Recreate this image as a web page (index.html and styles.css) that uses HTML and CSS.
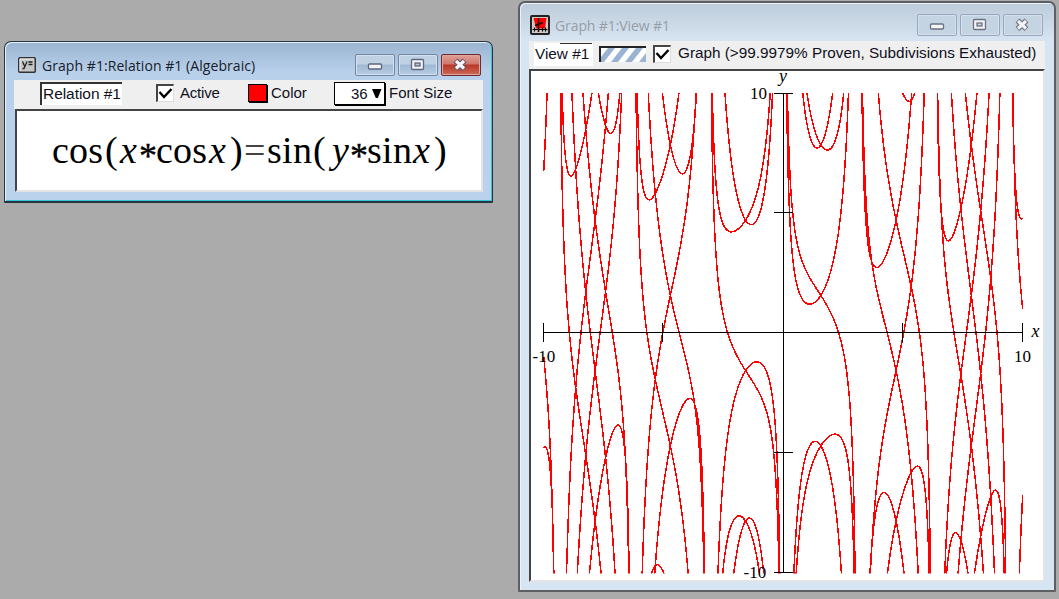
FILE: index.html
```html
<!DOCTYPE html>
<html lang="en">
<head>
<meta charset="utf-8">
<title>Graph</title>
<link rel="stylesheet" href="styles.css">
</head>
<body>
<div class="desktop">
  <section class="window relation">
    <header class="titlebar">
      <svg class="icon" width="18" height="16" viewBox="0 0 18 16">
        <rect x=".75" y=".75" width="16.5" height="14.5" rx="1" fill="#c6c6c6" stroke="#333" stroke-width="1.5"/>
        <path d="M2 14V2H16" fill="none" stroke="#f4f4f4"/>
        <path d="M4.500 4.500L6.500 9M9 4.500L6 11.500H4.500M10.500 5H14.500M10.500 7.500H14.500" fill="none" stroke="#222" stroke-width="1.300"/>
      </svg>
      <h1 class="title">Graph #1:Relation #1 (Algebraic)</h1>
      <div class="controls">
        <span class="btn"><svg width="40" height="22"><rect x="13.500" y="10" width="13" height="5" rx="1" fill="#f4f4f4" stroke="#5f6780" stroke-width="1.300"/></svg></span>
        <span class="btn"><svg width="40" height="22"><rect x="13.500" y="5.500" width="12" height="10" rx="1" fill="#f4f4f4" stroke="#5f6780" stroke-width="1.300"/><rect x="17" y="9" width="5" height="3" fill="#b5c4d6" stroke="#5f6780" stroke-width="1.300"/></svg></span>
        <span class="btn close"><svg width="40" height="22"><path d="M14.500 6.500L23.500 15M23.500 6.500L14.500 15" stroke="#66566a" stroke-width="5.600"/><path d="M15 7L23 14.500M23 7L15 14.500" stroke="#f6f6f6" stroke-width="3.200"/></svg></span>
      </div>
    </header>
    <div class="toolbar">
      <span class="field name">Relation #1</span>
      <span class="check"><svg width="18" height="18"><path d="M3.500 8L8 13L15.500 5" fill="none" stroke="#000" stroke-width="2.400"/></svg></span>
      <span class="label active">Active</span>
      <span class="swatch"></span>
      <span class="label color">Color</span>
      <span class="select"><span>36</span><svg width="10" height="10"><path d="M0 0H9.500L5.800 9H3.800Z"/></svg></span>
      <span class="label">Font Size</span>
    </div>
    <div class="pane">
      <svg class="formula" width="465" height="80" role="img">
        <text y="52"><tspan x="35" textLength="51">cos</tspan><tspan class="paren" x="88">(</tspan><tspan class="var" x="103">x</tspan><tspan class="star" x="122" dy="5">*</tspan><tspan x="139" dy="-5" textLength="51">cos</tspan><tspan class="var" x="192">x</tspan><tspan class="paren" x="213">)</tspan><tspan class="eq" x="227">=</tspan><tspan x="250" textLength="45">sin</tspan><tspan class="paren" x="296">(</tspan><tspan class="var" x="315">y</tspan><tspan class="star" x="333" dy="5">*</tspan><tspan x="350" dy="-5" textLength="45">sin</tspan><tspan class="var" x="396">x</tspan><tspan class="paren" x="417">)</tspan></text>
      </svg>
    </div>
  </section>

  <section class="window view">
    <header class="titlebar">
      <svg class="icon" width="20" height="20" viewBox="0 0 20 20">
        <rect x="1" y="1" width="18" height="18" rx="1" fill="#cfc8c8" stroke="#222" stroke-width="2"/>
        <path d="M3.500 3H16.500L15 13.500H6L5 9Z" fill="#f00"/>
        <path d="M8.500 3V17M5 10.500L13 7.500" stroke="#200" stroke-width="1.500"/>
        <path d="M2.500 14.500H17.500M4.500 12.500V16.500M12.500 12.500V16.500M15.500 12.500V16.500" stroke="#000" stroke-width="1.200"/>
      </svg>
      <h1 class="title">Graph #1:View #1</h1>
      <div class="controls">
        <span class="btn"><svg width="40" height="22"><rect x="13.500" y="10" width="13" height="5" rx="1" fill="#f4f4f4" stroke="#6b7283" stroke-width="1.300"/></svg></span>
        <span class="btn"><svg width="40" height="22"><rect x="13.500" y="5.500" width="12" height="10" rx="1" fill="#f4f4f4" stroke="#6b7283" stroke-width="1.300"/><rect x="17" y="9" width="5" height="3" fill="#c8d4e1" stroke="#6b7283" stroke-width="1.300"/></svg></span>
        <span class="btn"><svg width="40" height="22"><path d="M14.500 6.500L23.500 15M23.500 6.500L14.500 15" stroke="#6b7283" stroke-width="5.600"/><path d="M15 7L23 14.500M23 7L15 14.500" stroke="#f0f2f5" stroke-width="3.200"/></svg></span>
      </div>
    </header>
    <div class="toolbar">
      <span class="field viewname">View #1</span>
      <span class="stripes"><svg width="45" height="14"><path d="M-4 14L7 0H14L3 14ZM10 14L21 0H28L17 14ZM24 14L35 0H42L31 14ZM38 14L49 0H56L45 14Z" fill="#9ab3d2"/></svg></span>
      <span class="check"><svg width="18" height="18"><path d="M3.500 8L8 13L15.500 5" fill="none" stroke="#000" stroke-width="2.400"/></svg></span>
      <span class="label status">Graph (&gt;99.9979% Proven, Subdivisions Exhausted)</span>
    </div>
    <div class="pane">
      <svg class="plot" viewBox="531 71 512 509" width="512" height="509">
        <defs><clipPath id="area"><rect x="543" y="93" width="480" height="480.500"/></clipPath></defs>
        <path id="curve" clip-path="url(#area)"/>
        <path class="axis" d="M543 332.500H1023M783.500 93V573M543.500 323V342M662.500 323V342M902.500 323V342M1022.500 323V342M774 93.500H793M774 212.500H793M774 452.500H793M774 572.500H793"/>
        <g class="ticks">
          <text x="750" y="99">10</text><text x="743.500" y="578">-10</text>
          <text x="532.500" y="362">-10</text><text x="1014" y="362">10</text>
          <text class="axis-name" x="779" y="82">y</text><text class="axis-name" x="1031.500" y="337">x</text>
        </g>
      </svg>
    </div>
  </section>
</div>
<script src="plot.js"></script>
</body>
</html>
```
FILE: styles.css
```css
* { box-sizing: border-box; }
body { margin: 0; background: #ababab; font-family: "Liberation Sans", Arial, sans-serif; overflow: hidden; }
.desktop { position: relative; width: 1059px; height: 599px; }
.window { position: absolute; display: flex; flex-direction: column; border: 1px solid #28343e; border-radius: 7px 7px 1px 1px; }
.relation { left: 4px; top: 41px; width: 489px; height: 162px; padding: 1px 9px 9px; background: linear-gradient(#9ab4d1, #b8d0ea 30px, #bad2ec); box-shadow: inset 1px 1px #e6f0f8, inset -1px -1px #35c4da; border-bottom-width: 2px; }
.view { left: 518px; top: 1px; width: 538px; height: 591px; padding: 1px 9px 8px; background: linear-gradient(#bdccda, #d7e4f2 38px); border: 2px solid #5c5f63; box-shadow: inset 1px 1px #eaf2f8; }
.titlebar { display: flex; align-items: flex-start; flex: none; }
.relation .titlebar { height: 37px; padding: 14px 2px 0 4px; }
.view .titlebar { height: 37px; padding: 11px 3px 0 1px; }
.title { margin: 0; flex: 1; font: 14px/18px "Open Sans", sans-serif; white-space: nowrap; color: #17202b; }
.relation .title { margin: 0 0 0 6px; letter-spacing: .06px; }
.view .title { margin: 2px 0 0 5px; color: #969da6; letter-spacing: -.1px; }
.controls { display: flex; gap: 3px; margin-top: -3px; }
.view .controls { margin-top: -1px; margin-right: -1px; }
.btn { width: 40px; height: 22px; border: 1px solid #6f86a5; border-radius: 2px; background: linear-gradient(#c0d1e4 45%, #a0b8d3 50%, #b6cce4); box-shadow: inset 0 0 0 1px #d3e0ed; }
.btn svg { display: block; margin: -1px; }
.view .btn { border-color: #98a8c2; background: #c5d4e3; box-shadow: inset 0 0 0 1px #d4dfea; }
.btn.close { border-color: #6c2b31; background: linear-gradient(#dfa098, #d0776b 45%, #b93727 50%, #cc6a55); box-shadow: inset 0 0 0 1px #e2a59c; }
.toolbar { display: flex; align-items: flex-start; flex: none; background: #efefef; font-size: 15.300px; line-height: 20px; color: #10101c; white-space: nowrap; }
.relation .toolbar { height: 29px; padding: 2px 0 0 26px; font-size: 15px; }
.view .toolbar { height: 28px; padding: 2px 0 0 5px; }
.field { flex: none; background: #fff; }
.name { width: 82px; height: 23px; border-left: 2px solid #333; border-top: 2px solid #333; padding-left: 1px; font-size: 15.500px; letter-spacing: -.05px; line-height: 20px; }
.viewname { width: 59px; height: 23px; background: linear-gradient(#333, #333) 26px 0 / 32px 1px no-repeat #fff; padding-left: 1px; font-size: 15.300px; line-height: 22px; }
.check { flex: none; width: 18px; height: 18px; background: #fff; border-left: 2px solid #444; border-top: 2px solid #444; border-right: 1px solid #ddd; border-bottom: 1px solid #ddd; }
.check svg { display: block; margin: -2px; }
.relation .check { margin: 2px 0 0 34px; }
.view .check { margin: 2px 0 0 7px; }
.label { padding-top: 1px; }
.active { margin-left: 6px; width: 68px; letter-spacing: -.2px; }
.swatch { width: 19px; height: 18px; margin-top: 2px; background: #f00; border: 1px solid #000; box-shadow: 1px 1px #000; }
.color { margin-left: 4px; width: 63px; }
.select { display: flex; gap: 4px; width: 51px; height: 23px; padding: 1px 0 0 16px; border: 1px solid #000; box-shadow: 1px 1px #000; background: #fff; margin-right: 4px; }
.select svg { margin-top: 5px; }
.stripes { flex: none; width: 47px; height: 16px; margin: 3px 0 0 6px; border-left: 2px solid #222; border-top: 2px solid #222; background: #fff; overflow: hidden; }
.stripes svg { display: block; }
.status { margin-left: 7px; padding-top: 0; }
.pane { flex: 1; min-height: 0; background: #fff; border: 2px solid #444; border-right-color: #e4e4e4; border-bottom-color: #e4e4e4; overflow: hidden; }
.relation .pane { margin-left: 1px; }
.formula, .plot { display: block; }
.formula text { font: 38px "Liberation Serif", serif; }
.formula .var { font-style: italic; }
.formula .star { font-size: 36px; stroke: #000; stroke-width: .4; }
.formula .eq { fill: #444; }
.plot { shape-rendering: crispEdges; }
#curve { fill: none; stroke: #ff0000; stroke-width: 1.500; }
.axis { fill: none; stroke: #000; stroke-width: 1; }
.ticks { font: 17px "Liberation Serif", serif; }
.axis-name { font-size: 18px; font-style: italic; }
```
FILE: plot.js
```js
// y sin x = pi/2 + 2 pi k +/- x cos x, the branches of cos(x cos x) = sin(y sin x)
const scale = 23.95, cx = 783.2, cy = 333;
let d = "";
for (const sign of [-1, 1]) {
  for (let k = -6; k <= 6; k++) {
    let drawing = false;
    for (let i = -4000; i <= 4000; i++) {
      const x = i / 400;
      const y = (Math.PI / 2 + 2 * Math.PI * k + sign * x * Math.cos(x)) / Math.sin(x);
      if (!isFinite(y) || Math.abs(y) > 11.5) { drawing = false; continue; }
      d += (drawing ? "L" : "M") + (cx + x * scale).toFixed(2) + " " + (cy - y * scale).toFixed(2);
      drawing = true;
    }
  }
}
document.getElementById("curve").setAttribute("d", d);
```
